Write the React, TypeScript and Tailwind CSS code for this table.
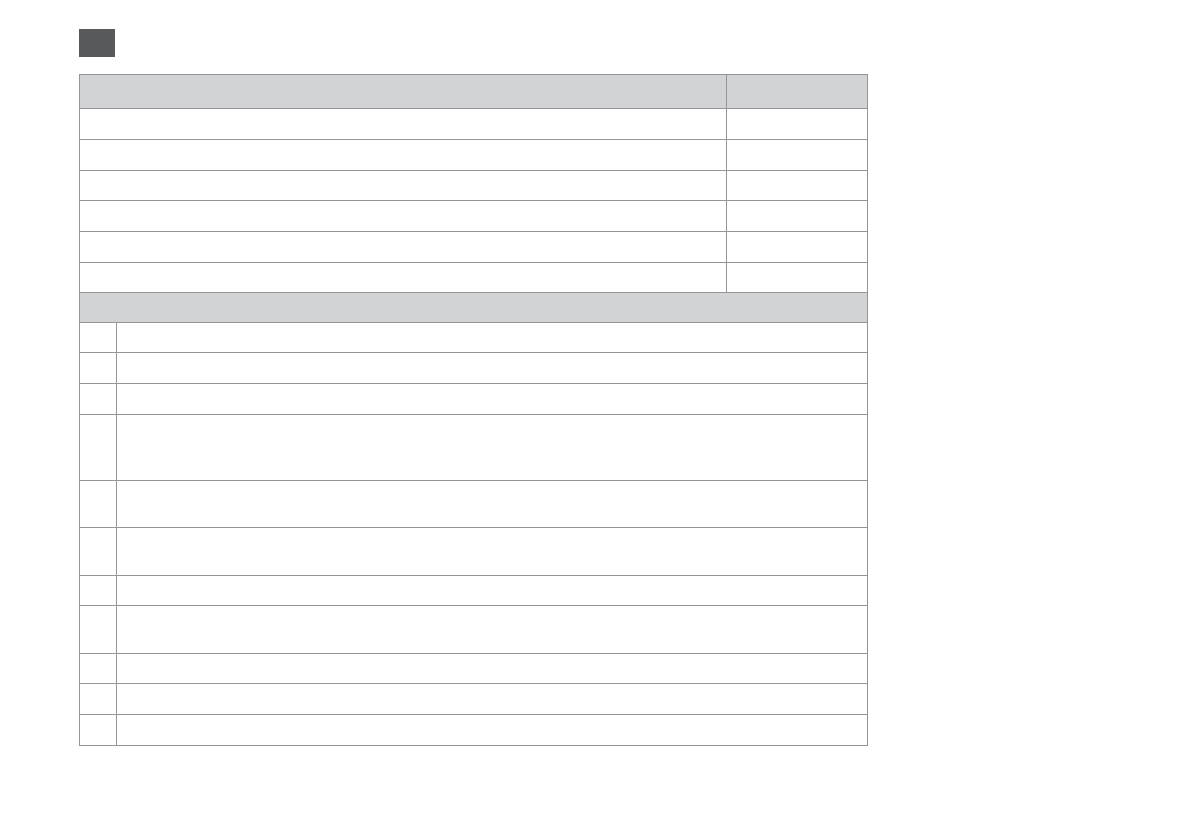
import React from 'react'

const topRows = [34, 31, 31, 30, 31, 31, 30]
const bottomRows = [30, 31, 31, 66, 47, 48, 30, 48, 30, 31, 31]

function App() {
    return (
        <div className='min-h-[839px] w-full bg-white pt-[29px] pl-[79px]'>
            <div className='h-[28px] w-[36px] bg-[#58595b]' />

            <div className='mt-[17px] w-[789px] border border-[#939598]'>
                {topRows.map((h, i) => (
                    <div
                        key={'t' + i}
                        className={i === 0 ? 'flex bg-[#d1d3d4]' : 'flex border-t border-[#939598]'}
                        style={{ height: i === 0 ? h - 1 : h }}
                    >
                        <div className='flex-1' />
                        <div className='w-[141px] border-l border-[#939598]' />
                    </div>
                ))}

                <div className='h-[30px] border-t border-[#939598] bg-[#d1d3d4]' />

                {bottomRows.map((h, i) => (
                    <div key={'b' + i} className='flex border-t border-[#939598]' style={{ height: h }}>
                        <div className='w-[36px]' />
                        <div className='flex-1 border-l border-[#939598]' />
                    </div>
                ))}
            </div>
        </div>
    )
}

export default App
